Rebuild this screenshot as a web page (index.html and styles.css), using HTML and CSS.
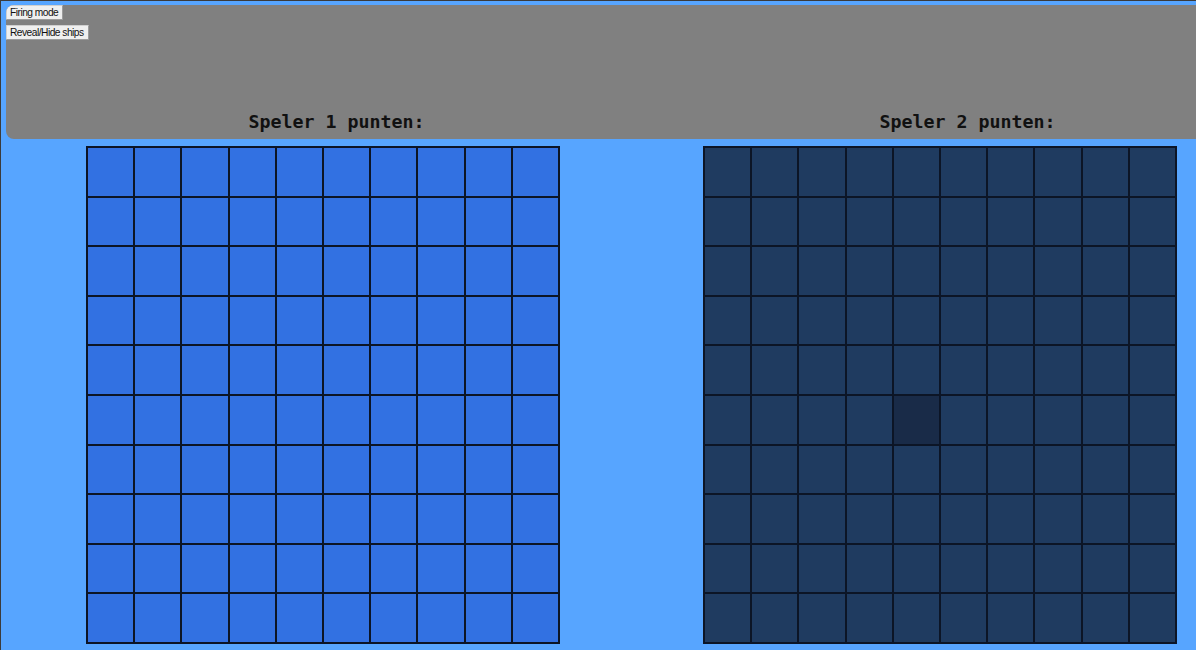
FILE: index.html
```html
<!DOCTYPE html>
<html lang="nl">
<head>
<meta charset="utf-8">
<title>Zeeslag</title>
<link rel="stylesheet" href="styles.css">
</head>
<body>
<div class="page">
  <header class="panel">
    <div class="controls">
      <button class="btn">Firing mode</button>
      <button class="btn">Reveal/Hide ships</button>
    </div>
    <div class="scores">
      <h2 class="score">Speler 1 punten:</h2>
      <h2 class="score">Speler 2 punten:</h2>
    </div>
  </header>
  <main class="boards">
    <div class="board board-1">
      <div class="cell"></div><div class="cell"></div><div class="cell"></div><div class="cell"></div><div class="cell"></div><div class="cell"></div><div class="cell"></div><div class="cell"></div><div class="cell"></div><div class="cell"></div>
      <div class="cell"></div><div class="cell"></div><div class="cell"></div><div class="cell"></div><div class="cell"></div><div class="cell"></div><div class="cell"></div><div class="cell"></div><div class="cell"></div><div class="cell"></div>
      <div class="cell"></div><div class="cell"></div><div class="cell"></div><div class="cell"></div><div class="cell"></div><div class="cell"></div><div class="cell"></div><div class="cell"></div><div class="cell"></div><div class="cell"></div>
      <div class="cell"></div><div class="cell"></div><div class="cell"></div><div class="cell"></div><div class="cell"></div><div class="cell"></div><div class="cell"></div><div class="cell"></div><div class="cell"></div><div class="cell"></div>
      <div class="cell"></div><div class="cell"></div><div class="cell"></div><div class="cell"></div><div class="cell"></div><div class="cell"></div><div class="cell"></div><div class="cell"></div><div class="cell"></div><div class="cell"></div>
      <div class="cell"></div><div class="cell"></div><div class="cell"></div><div class="cell"></div><div class="cell"></div><div class="cell"></div><div class="cell"></div><div class="cell"></div><div class="cell"></div><div class="cell"></div>
      <div class="cell"></div><div class="cell"></div><div class="cell"></div><div class="cell"></div><div class="cell"></div><div class="cell"></div><div class="cell"></div><div class="cell"></div><div class="cell"></div><div class="cell"></div>
      <div class="cell"></div><div class="cell"></div><div class="cell"></div><div class="cell"></div><div class="cell"></div><div class="cell"></div><div class="cell"></div><div class="cell"></div><div class="cell"></div><div class="cell"></div>
      <div class="cell"></div><div class="cell"></div><div class="cell"></div><div class="cell"></div><div class="cell"></div><div class="cell"></div><div class="cell"></div><div class="cell"></div><div class="cell"></div><div class="cell"></div>
      <div class="cell"></div><div class="cell"></div><div class="cell"></div><div class="cell"></div><div class="cell"></div><div class="cell"></div><div class="cell"></div><div class="cell"></div><div class="cell"></div><div class="cell"></div>
    </div>
    <div class="board board-2">
      <div class="cell"></div><div class="cell"></div><div class="cell"></div><div class="cell"></div><div class="cell"></div><div class="cell"></div><div class="cell"></div><div class="cell"></div><div class="cell"></div><div class="cell"></div>
      <div class="cell"></div><div class="cell"></div><div class="cell"></div><div class="cell"></div><div class="cell"></div><div class="cell"></div><div class="cell"></div><div class="cell"></div><div class="cell"></div><div class="cell"></div>
      <div class="cell"></div><div class="cell"></div><div class="cell"></div><div class="cell"></div><div class="cell"></div><div class="cell"></div><div class="cell"></div><div class="cell"></div><div class="cell"></div><div class="cell"></div>
      <div class="cell"></div><div class="cell"></div><div class="cell"></div><div class="cell"></div><div class="cell"></div><div class="cell"></div><div class="cell"></div><div class="cell"></div><div class="cell"></div><div class="cell"></div>
      <div class="cell"></div><div class="cell"></div><div class="cell"></div><div class="cell"></div><div class="cell"></div><div class="cell"></div><div class="cell"></div><div class="cell"></div><div class="cell"></div><div class="cell"></div>
      <div class="cell"></div><div class="cell"></div><div class="cell"></div><div class="cell"></div><div class="cell cell-hover"></div><div class="cell"></div><div class="cell"></div><div class="cell"></div><div class="cell"></div><div class="cell"></div>
      <div class="cell"></div><div class="cell"></div><div class="cell"></div><div class="cell"></div><div class="cell"></div><div class="cell"></div><div class="cell"></div><div class="cell"></div><div class="cell"></div><div class="cell"></div>
      <div class="cell"></div><div class="cell"></div><div class="cell"></div><div class="cell"></div><div class="cell"></div><div class="cell"></div><div class="cell"></div><div class="cell"></div><div class="cell"></div><div class="cell"></div>
      <div class="cell"></div><div class="cell"></div><div class="cell"></div><div class="cell"></div><div class="cell"></div><div class="cell"></div><div class="cell"></div><div class="cell"></div><div class="cell"></div><div class="cell"></div>
      <div class="cell"></div><div class="cell"></div><div class="cell"></div><div class="cell"></div><div class="cell"></div><div class="cell"></div><div class="cell"></div><div class="cell"></div><div class="cell"></div><div class="cell"></div>
    </div>
  </main>
</div>
</body>
</html>
```

FILE: styles.css
```css
html, body {
  margin: 0;
  padding: 0;
  height: 100%;
  overflow: hidden;
  background: #57a5ff;
}

.page {
  box-sizing: border-box;
  height: 650px;
  border-top: 1px solid #3b3b3b;
  border-left: 1px solid #3b3b3b;
  background: #57a5ff;
  padding: 4px 0 0 5px;
  font-family: "Liberation Sans", Arial, sans-serif;
}

.panel {
  box-sizing: border-box;
  height: 134px;
  background: #808080;
  border-radius: 8px 0 0 8px;
  display: flex;
  flex-direction: column;
  overflow: hidden;
}

.controls {
  display: flex;
  flex-direction: column;
  align-items: flex-start;
  gap: 5px;
}

.btn {
  font-family: "Liberation Sans", Arial, sans-serif;
  font-size: 10.2px;
  letter-spacing: -0.5px;
  line-height: 13px;
  height: 15px;
  padding: 0 4px 0 3px;
  margin: 0;
  color: #111;
  background: #efefef;
  border: 1px solid #d0d0d0;
  border-right-color: #9c9c9c;
  border-bottom-color: #9c9c9c;
  border-radius: 1px;
}

.scores {
  margin-top: auto;
  display: flex;
  padding-left: 15px;
  padding-bottom: 6px;
}

.score {
  flex: 0 0 631px;
  margin: 0;
  text-align: center;
  font-family: "DejaVu Sans Mono", "Liberation Mono", monospace;
  font-weight: bold;
  font-size: 18.3px;
  line-height: 22px;
  color: #111;
}

.boards {
  display: flex;
  gap: 143px;
  padding: 7px 0 0 80px;
}

.board {
  box-sizing: border-box;
  width: 474px;
  height: 498px;
  display: grid;
  grid-template-columns: repeat(10, 1fr);
  grid-template-rows: repeat(10, 1fr);
  border: 1px solid #0c1526;
}

.cell {
  border: 1px solid #0c1526;
}

.board-1 .cell {
  background: #3271e2;
}

.board-2 .cell {
  background: #1f3b60;
}

.board-2 .cell-hover {
  background: #192b48;
}
```
